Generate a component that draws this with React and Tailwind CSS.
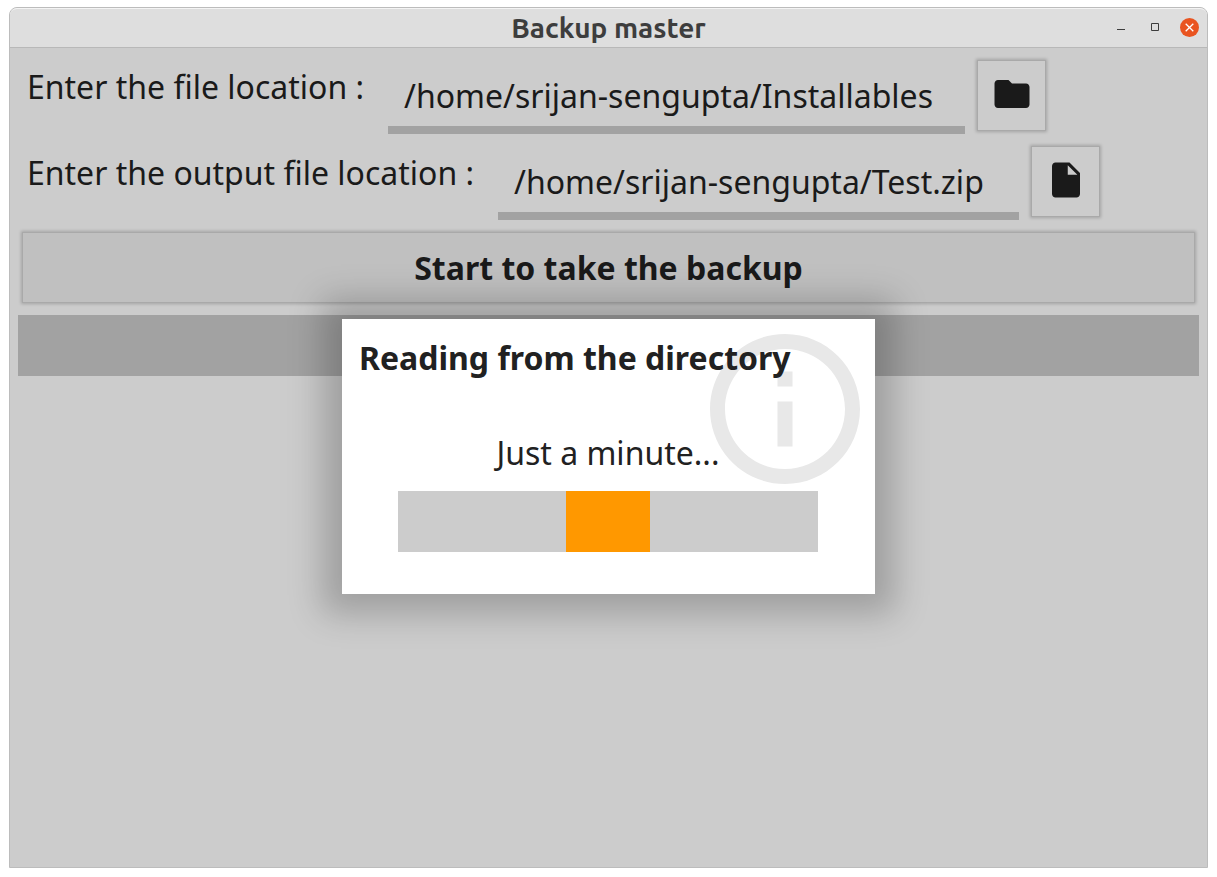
import React from "react";

function FolderIcon() {
  return (
    <svg viewBox="0 0 24 24" className="size-[42px]" fill="currentColor" aria-hidden="true">
      <path d="M10 4H4c-1.1 0-1.99.9-1.99 2L2 18c0 1.1.9 2 2 2h16c1.1 0 2-.9 2-2V8c0-1.1-.9-2-2-2h-8l-2-2z" />
    </svg>
  );
}

function FileIcon() {
  return (
    <svg viewBox="0 0 24 24" className="size-[42px]" fill="currentColor" aria-hidden="true">
      <path d="M6 2c-1.1 0-1.99.9-1.99 2L4 20c0 1.1.89 2 1.99 2H18c1.1 0 2-.9 2-2V8l-6-6H6zm7 7V3.5L18.5 9H13z" />
    </svg>
  );
}

function TitleBar() {
  return (
    <header className="grid h-10 shrink-0 grid-cols-[1fr_auto_1fr] items-center rounded-t-[7px] border-t border-b border-t-[#f4f4f4] border-b-[#b8b8b8] bg-[#dedede]">
      <span />
      <h1 className="text-[28px] leading-9 font-bold text-[#3d3d3d] [font-family:Ubuntu,'Noto_Sans',sans-serif]">
        Backup master
      </h1>
      <div className="flex items-center justify-end gap-4 pr-2 pb-0.5">
        <button type="button" aria-label="Minimize" className="flex size-[18px] items-center justify-center">
          <svg viewBox="0 0 18 18" className="size-[18px]" aria-hidden="true">
            <path d="M5 11.5h8" stroke="#3d3d3d" fill="none" />
          </svg>
        </button>
        <button type="button" aria-label="Maximize" className="flex size-[18px] items-center justify-center">
          <svg viewBox="0 0 18 18" className="size-[18px]" aria-hidden="true">
            <path d="M5.5 5.5h7v7h-7z" stroke="#3d3d3d" fill="none" />
          </svg>
        </button>
        <button
          type="button"
          aria-label="Close"
          className="flex size-[19px] items-center justify-center rounded-full bg-[#e95420]"
        >
          <svg viewBox="0 0 19 19" className="size-[19px]" aria-hidden="true">
            <path d="M5.7 5.7l7.6 7.6M13.3 5.7l-7.6 7.6" stroke="#fff" strokeWidth="1.3" fill="none" />
          </svg>
        </button>
      </div>
    </header>
  );
}

function PathRow({ id, label, value, widthClass, buttonLabel, icon }) {
  return (
    <div className="flex h-[78px] items-start gap-2">
      <label htmlFor={id} className="pt-[9px] pr-4 pl-[9px] whitespace-nowrap">
        {label}
      </label>
      <input
        id={id}
        type="text"
        defaultValue={value}
        className={`h-[78px] min-w-0 border-b-8 border-[#a2a2a2] bg-transparent px-4 pt-[17px] pb-[9px] outline-none ${widthClass}`}
      />
      <button
        type="button"
        aria-label={buttonLabel}
        className="m-1 flex h-[71px] w-[69px] shrink-0 items-center justify-center border border-[#a9a9a9] pb-1 shadow-[0_0_3px_1px_rgba(0,0,0,0.2)]"
      >
        {icon}
      </button>
    </div>
  );
}

function ReadingDialog() {
  return (
    <section
      role="dialog"
      aria-labelledby="dialog-title"
      className="relative w-[533px] bg-white pt-[17px] pr-[18px] pb-[42px] pl-[17px] text-[#212121] shadow-[0_0_32px_20px_rgba(0,0,0,0.22)]"
    >
      <svg viewBox="0 0 24 24" className="absolute top-0 right-0 size-[180px]" fill="#e8e8e8" aria-hidden="true">
        <path d="M11 7h2v2h-2zm0 4h2v6h-2zm1-9C6.48 2 2 6.48 2 12s4.48 10 10 10 10-4.48 10-10S17.52 2 12 2zm0 18c-4.41 0-8-3.59-8-8s3.59-8 8-8 8 3.59 8 8-3.59 8-8 8z" />
      </svg>
      <h2 id="dialog-title" className="relative font-bold">
        Reading from the directory
      </h2>
      <p className="relative mt-[51px] text-center">Just a minute...</p>
      <div
        role="progressbar"
        aria-label="Reading from the directory"
        className="relative mx-auto mt-4 flex h-[61px] w-[420px] justify-center bg-[#cccccc]"
      >
        <div className="w-1/5 bg-[#ff9800]" />
      </div>
    </section>
  );
}

export default function App() {
  return (
    <div className="flex min-h-screen flex-col bg-white px-[9px] pt-[7px] pb-[9px]">
      <div className="flex grow flex-col rounded-t-lg border border-[#bcbcbc] bg-[#cccccc]">
        <TitleBar />
        <main className="relative grow p-2 text-[32px] leading-[44px] text-[#1a1a1a] [font-family:'Noto_Sans',sans-serif]">
          <form className="flex flex-col gap-2" onSubmit={(e) => e.preventDefault()}>
            <PathRow
              id="source"
              label="Enter the file location :"
              value="/home/srijan-sengupta/Installables"
              widthClass="w-[577px]"
              buttonLabel="Choose folder"
              icon={<FolderIcon />}
            />
            <PathRow
              id="output"
              label="Enter the output file location :"
              value="/home/srijan-sengupta/Test.zip"
              widthClass="w-[521px]"
              buttonLabel="Choose file"
              icon={<FileIcon />}
            />
            <button
              type="submit"
              className="m-1 h-[71px] border border-[#a9a9a9] bg-[#c0c0c0] font-bold shadow-[0_0_3px_1px_rgba(0,0,0,0.2)]"
            >
              Start to take the backup
            </button>
            <div role="progressbar" aria-label="Backup progress" aria-valuenow={0} className="h-[61px] bg-[#a2a2a2]" />
          </form>
          <div className="absolute inset-0 flex items-center justify-center pb-0.5">
            <ReadingDialog />
          </div>
        </main>
      </div>
    </div>
  );
}
